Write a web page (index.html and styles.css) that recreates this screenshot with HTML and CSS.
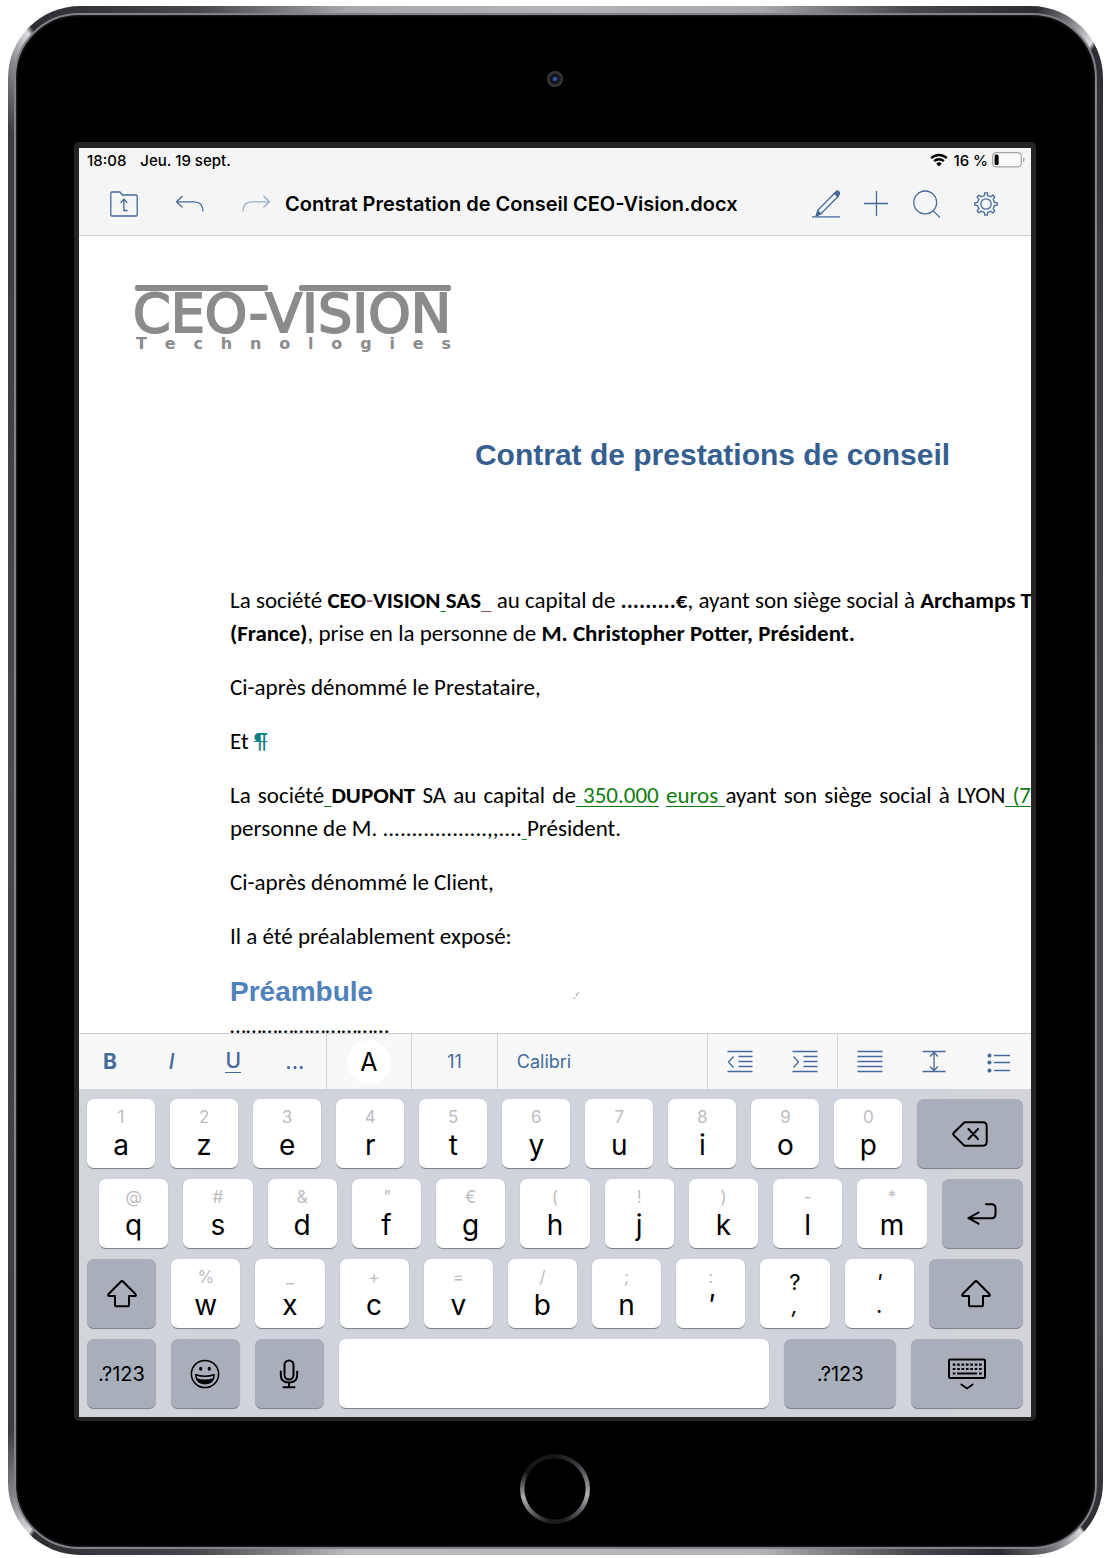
FILE: index.html
```html
<!DOCTYPE html>
<html lang="fr">
<head>
<meta charset="utf-8">
<title>Contrat Prestation de Conseil CEO-Vision.docx</title>
<link rel="stylesheet" href="styles.css">
</head>
<body>
<div class="device">
<div class="glass">
  <div class="top-bezel"><span class="camera"></span></div>
  <div class="screen">
    <header class="app-header">
      <div class="status">
        <span>18:08</span><span class="date">Jeu. 19 sept.</span>
        <svg class="wifi" width="18" height="14" viewBox="0 0 18 14"><path fill="none" stroke="#000" stroke-width="2.4" d="M1.2 5.2a11 11 0 0 1 15.6 0M4.2 8.2a6.8 6.8 0 0 1 9.6 0"/><path d="M9 13.4 6.3 10.6a3.8 3.8 0 0 1 5.4 0Z"/></svg>
        <span>16 %</span>
        <svg class="battery" width="33" height="16" viewBox="0 0 33 16"><rect x=".7" y=".7" width="28.6" height="14.2" rx="3.6" fill="#fafafa" stroke="#a3a3a5" stroke-width="1.2"/><rect x="2.6" y="2.5" width="4" height="10.6" rx="1.6"/><path d="M31 5.4a2.6 2.6 0 0 1 0 4.8Z" fill="#a3a3a5"/></svg>
      </div>
      <div class="titlebar">
        <button class="tool folder" aria-label="Dossier"><svg width="28" height="26" viewBox="0 0 28 26"><path d="M.8 24V2.4q0-1.4 1.3-1.4h7.7l2.7 3h13.2q1.5 0 1.5 1.4V24q0 1-1.2 1H2q-1.2 0-1.2-1Z"/><path d="M17.5 19.5h-3.600V8.500M10.600 11.700l3.300-3.500 3.300 3.500"/></svg></button>
        <button class="tool undo" aria-label="Annuler"><svg width="30" height="18" viewBox="0 0 30 18"><path d="M7.500 1 1.500 6.800l6 5.700M1.500 6.800h17.500q9 0 9 9.700"/></svg></button>
        <button class="tool redo" aria-label="Rétablir"><svg width="30" height="18" viewBox="0 0 30 18"><path d="m22.500 1 6 5.800-6 5.700M28.500 6.800H11q-9 0-9 9.700"/></svg></button>
        <h1 class="filename">Contrat Prestation de Conseil CEO-Vision.docx</h1>
        <button class="tool pencil" aria-label="Modifier"><svg width="28" height="28" viewBox="0 0 28 28"><path d="M0 26.800h28M4.500 25.500l1.300-5.200L22.800 3l3.400 3.300L9 23.600Z"/><path class="solid" d="m22.500 3.400 1.600-1.800q1.200-1.200 2.700.2t.3 2.800L25.600 6.600ZM4.300 25.800l1.600-4.600 2.900 2.700Z"/></svg></button>
        <button class="tool plus" aria-label="Insérer"><svg width="24" height="26" viewBox="0 0 24 26"><path d="M0 12.500h24M12.500 0v25"/></svg></button>
        <button class="tool search" aria-label="Rechercher"><svg width="28" height="28" viewBox="0 0 28 28"><circle cx="12.200" cy="12.400" r="11.400"/><path d="m20 20.600 7 7"/></svg></button>
        <button class="tool gear" aria-label="Réglages"><svg width="24" height="24" viewBox="0 0 24 24"><path d="M10.300 3.600 10.800.8h2.400l.5 2.800 3 1.200L19 3.200 20.800 5l-1.600 2.300 1.200 3 2.800.5v2.400l-2.800.5-1.200 3 1.600 2.300-1.800 1.800-2.300-1.600-3 1.200-.5 2.800h-2.400l-.5-2.800-3-1.200L5 20.800 3.200 19l1.600-2.300-1.200-3-2.800-.5v-2.400l2.800-.5 1.200-3L3.200 5 5 3.200l2.300 1.600Z"/><circle cx="12" cy="12" r="5.200"/></svg></button>
      </div>
    </header>

    <main class="document">
      <div class="logo">
        <div class="logo-bars"><i></i><i></i></div>
        <div class="logo-name">CEO-VISION</div>
        <div class="logo-sub">T e c h n o l o g i e s</div>
      </div>
      <article class="text">
        <h2 class="title">Contrat de prestations de conseil</h2>
        <p><span class="fill">La société <b>CEO<span class="minus">-</span>VISION<u> </u>SAS<u class="plum">&nbsp;&nbsp;</u></b> au capital de <b>.........€</b>, ayant son siège social à <b>Archamps T</b></span>
        <b>(France)</b>, prise en la personne de <b>M. Christopher Potter, Président.</b></p>
        <p>Ci-après dénommé le Prestataire,</p>
        <p>Et <s>¶</s></p>
        <p><span class="fill">La société<u> </u><b>DUPONT</b> SA au capital de<u> 350.000</u> <u>euros </u>ayant son siège social à LYON<u> (7</u></span>
        personne de M. ..................,,....<u> </u>Président.</p>
        <p>Ci-après dénommé le Client,</p>
        <p>Il a été préalablement exposé:</p>
        <h3 class="section">Préambule</h3>
        <svg class="stray" width="6" height="8" viewBox="0 0 6 8"><path d="M.500 7 2 5.500M3 4l2.500-3.500" fill="none" stroke="#888"/></svg>
        <p class="cut">…………………………</p>
      </article>
    </main>

    <div class="format">
      <div class="group styles">
        <button><b>B</b></button><button><i>I</i></button><button><span class="under">U</span></button><button>...</button>
      </div>
      <div class="group color"><button class="letter">A</button></div>
      <div class="group size"><button>11</button></div>
      <div class="group font"><button>Calibri</button></div>
      <div class="group indent">
        <button aria-label="Diminuer le retrait"><svg width="26" height="24" viewBox="0 0 26 24"><path d="M.500 1.500h25M11.500 6.500h14M11.500 11.500h14M11.500 16.500h14M.500 21.500h25M6.500 6.500l-5 5.500 5 5.500"/></svg></button>
        <button aria-label="Augmenter le retrait"><svg width="26" height="24" viewBox="0 0 26 24"><path d="M.500 1.500h25M11.500 6.500h14M11.500 11.500h14M11.500 16.500h14M.500 21.500h25M1.500 6.500l5 5.500-5 5.500"/></svg></button>
      </div>
      <div class="group para">
        <button aria-label="Justifier"><svg width="26" height="24" viewBox="0 0 26 24"><path d="M.500 1.500h25M.500 6.500h25M.500 11.500h25M.500 16.500h25M.500 21.500h25"/></svg></button>
        <button aria-label="Interligne"><svg width="26" height="24" viewBox="0 0 26 24"><path d="M1.500 1.500h23M1.500 21.500h23M13 2.500v18M9 6.500l4-4 4 4M9 16.500l4 4 4-4"/></svg></button>
        <button aria-label="Liste"><svg width="26" height="24" viewBox="0 0 26 24"><path d="M8 5.500h16M8 12.500h16M8 20.500h16"/><circle class="solid" cx="3.500" cy="5.500" r="1.400"/><circle class="solid" cx="3.500" cy="12.500" r="1.400"/><circle class="solid" cx="3.500" cy="20.500" r="1.400"/></svg></button>
      </div>
    </div>

    <div class="keyboard">
      <div class="row r1">
        <button><small>1</small>a</button><button><small>2</small>z</button><button><small>3</small>e</button><button><small>4</small>r</button><button><small>5</small>t</button><button><small>6</small>y</button><button><small>7</small>u</button><button><small>8</small>i</button><button><small>9</small>o</button><button><small>0</small>p</button>
        <button class="dark del" aria-label="Effacer"><svg width="36" height="26" viewBox="0 0 36 26"><path d="M12.500 1.200h18.200q4 0 4 4v15.500q0 4-4 4H12.500L2 14.500q-1.400-1.500 0-3ZM16.500 8l9.500 10M26 8l-9.500 10"/></svg></button>
      </div>
      <div class="row r2">
        <button><small>@</small>q</button><button><small>#</small>s</button><button><small>&amp;</small>d</button><button><small><i>"</i></small>f</button><button><small>€</small>g</button><button><small>(</small>h</button><button><small>!</small>j</button><button><small>)</small>k</button><button><small>-</small>l</button><button><small>*</small>m</button>
        <button class="dark enter" aria-label="Retour"><svg width="30" height="22" viewBox="0 0 30 22"><path d="M19 1.200h5.500q4 0 4 4v6q0 4-4 4H1.500M11.500 9.500l-10 5.600 10 5.600"/></svg></button>
      </div>
      <div class="row r3">
        <button class="dark" aria-label="Majuscule"><svg width="30" height="28" viewBox="0 0 30 28"><path d="M13.800 1.700q1.200-1.200 2.400 0L28.400 14q1.200 2-.6 2H22v8.700q0 1.600-1.600 1.600H9.600Q8 26.300 8 24.700V16H2.200q-1.800 0-.6-2Z"/></svg></button>
        <button><small>%</small>w</button><button><small>_</small>x</button><button><small>+</small>c</button><button><small>=</small>v</button><button><small>/</small>b</button><button><small>;</small>n</button><button><small>:</small><i>'</i></button><button class="twin"><small>?</small><i>,</i></button><button class="twin"><small><i>'</i></small>.</button>
        <button class="dark shift" aria-label="Majuscule"><svg width="30" height="28" viewBox="0 0 30 28"><path d="M13.800 1.700q1.200-1.200 2.400 0L28.400 14q1.200 2-.6 2H22v8.700q0 1.600-1.600 1.600H9.600Q8 26.300 8 24.700V16H2.200q-1.800 0-.6-2Z"/></svg></button>
      </div>
      <div class="row r4">
        <button class="dark">.?123</button>
        <button class="dark" aria-label="Emoji"><svg width="30" height="30" viewBox="0 0 30 30"><g stroke-width="1.500"><circle cx="15" cy="15" r="13.600"/><path d="M5.700 15.800q9.300 3 18.600 0-.6 9-9.300 9t-9.300-9Z"/></g><g class="ink"><ellipse cx="10.700" cy="9.800" rx="1.600" ry="2"/><ellipse cx="19.300" cy="9.800" rx="1.600" ry="2"/><path d="M6.500 19.200q8.500 2.600 17 0-2 5.500-8.500 5.500t-8.500-5.500Z"/></g></svg></button>
        <button class="dark" aria-label="Dictée"><svg width="20" height="30" viewBox="0 0 20 30"><rect x="5.500" y="1.500" width="9" height="19" rx="4.500"/><path d="M1.800 12.500V16q0 7.500 8.200 7.500t8.200-7.500v-3.500M10 23.500V28M4.500 28.300h11"/></svg></button>
        <button class="space" aria-label="Espace"></button>
        <button class="dark num">.?123</button>
        <button class="dark hide" aria-label="Masquer le clavier"><svg width="38" height="32" viewBox="0 0 38 32"><rect x="1" y="1.500" width="36" height="18.500" rx="1"/><path stroke-width="2.200" stroke-dasharray="2.700 1.700" d="M4.700 6.700h29M4.700 11h29"/><path stroke-width="2.200" d="M4.700 15.500h2.700M9.200 15.500h19.800M31 15.500h2.700"/><path stroke-width="1.600" d="m12.700 26 6.300 4.500 6.300-4.500"/></svg></button>
      </div>
    </div>
  </div>
  <div class="bottom-bezel"><button class="home" aria-label="Accueil"></button></div>
</div>
</div>
</body>
</html>
```
FILE: styles.css
```css
* { box-sizing: border-box; }
body { margin: 0; padding: 6px 5px 4px 8px; background: #fff; font-family: Inter, "Liberation Sans", sans-serif; color: #000; }
button { margin: 0; padding: 0; border: 0; background: none; font: inherit; color: inherit; display: flex; align-items: center; justify-content: center; }
svg { display: block; flex: none; }

/* Device */
.device {
  padding: 7px 6px 6px;
  border-radius: 72px;
  background: conic-gradient(#b4b4b6 0deg, #a8a8aa 15deg, #45454b 25deg, #2c2c32 32deg, #77777c 34deg, #dedee0 36deg, #2c2c32 36.3deg, #3c3c42 45deg, #4a4a50 90deg, #4a4a50 135deg, #2c2c32 144.800deg, #dedee0 145deg, #77777c 147deg, #2c2c32 150deg, #45454b 155deg, #b4b4b6 165deg, #bcbcbe 195deg, #45454b 205deg, #2c2c32 214.700deg, #dedee0 215deg, #8a8a90 217deg, #3c3c42 220deg, #4a4a50 270deg, #3c3c42 320deg, #8a8a90 323deg, #dedee0 324.800deg, #2c2c32 325.200deg, #45454b 335deg, #a8a8aa 345deg, #b4b4b6 360deg);
}
.glass { padding: 0 59px 0 58px; border: 2px solid #828288; border-radius: 65px; background: #000; box-shadow: inset 0 0 2px 1px #222226; }
.top-bezel { height: 127px; display: flex; justify-content: center; align-items: center; }
.camera { width: 16px; height: 16px; border-radius: 50%; background: radial-gradient(circle, #3558a8 0 1px, #10182e 3px, #0c0c14 4px, #303034 6px, #3e3e44 8px); }
.bottom-bezel { height: 126px; display: flex; justify-content: center; align-items: center; padding-top: 10px; }
.home { width: 70px; height: 70px; border-radius: 50%; background: radial-gradient(circle, #000 0 30px, transparent 31px), conic-gradient(#161618, #35353a 40deg, #77777c 75deg, #b0b0b4 100deg, #55555a 135deg, #1c1c1e 165deg, #1c1c1e 190deg, #55555a 220deg, #b0b0b4 255deg, #66666a 275deg, #161618 300deg, #161618); }
.screen { border: 5px solid #242424; border-bottom-width: 4px; border-top-width: 6px; border-radius: 5px; background: #fff; }

/* Header */
.app-header { background: #f5f5f5; border-bottom: 1px solid #cfcfcf; }
.status { display: flex; align-items: center; height: 24px; padding: 0 6px 0 8px; font-size: 15px; font-weight: 500; }
.date { margin-left: 14px; }
.wifi { margin: 0 5px 0 auto; }
.battery { margin-left: 4px; }
.titlebar { display: flex; align-items: center; height: 63px; padding: 0 33px 0 31px; }
.tool svg, .format svg { fill: none; stroke: #456a9b; stroke-width: 1.300; }
.tool .solid, .format .solid { fill: #456a9b; }
.undo { margin-left: 37px; }
.redo { margin-left: 36px; opacity: .5; }
.filename { flex: 1; margin: 0 0 0 14px; font-size: 20px; line-height: 24px; font-weight: 600; white-space: nowrap; }
.plus { margin-left: 24px; }
.search { margin-left: 25px; }
.gear { margin-left: 33px; }

/* Document */
.document { height: 797px; overflow: hidden; }
.logo { width: 320px; margin: 49px 0 0 54px; color: #8b8b8b; font-family: "DejaVu Sans", sans-serif; }
.logo-bars { display: flex; justify-content: space-between; padding: 0 2px; }
.logo-bars i { width: 133px; height: 6px; border-radius: 2px; background: #8b8b8b; }
.logo-bars i + i { width: 152px; }
.logo-name { font-size: 54px; line-height: 46px; white-space: nowrap; -webkit-text-stroke: 2px #8b8b8b; }
.logo-sub { padding: 0 2px 0 3px; font-size: 16px; line-height: 13px; font-weight: 700; text-align-last: justify; }
.text { padding-left: 151px; font-family: Carlito, Lato, sans-serif; font-size: 23px; line-height: 33px; }
.text p { margin: 0 0 21px; white-space: nowrap; }
.fill { display: block; text-align-last: justify; }
.title { margin: 87px 0 111px; padding-left: 164px; text-align: center; font: 700 30px/36px "Liberation Sans", sans-serif; color: #365f91; white-space: nowrap; }
.text u { color: #0f7d0f; text-decoration-thickness: 1px; text-underline-offset: 3px; }
.text .plum { color: #8a4a6b; }
.minus { color: #8a4a6b; font-weight: 400; }
.text s { color: #0b8080; text-decoration-thickness: 1px; }
.text .section { margin: 21px 0 0; font: 700 28px/36px "Liberation Sans", sans-serif; color: #4f81bd; }
.stray { margin: -18px 0 0 343px; }
.text .cut { margin-top: 9px; }

/* Formatting bar */
.format { display: flex; height: 56px; border-top: 1px solid #cdcdcf; background: #f8f8f9; color: #456a9b; font-size: 18px; }
.group { display: flex; justify-content: space-around; align-items: center; border-left: 1px solid #d4d4d6; }
.group:first-child { border-left: 0; }
.styles { flex: 248; font-size: 21px; font-weight: 500; }
.styles button { flex: 1; }
.under { line-height: 22px; border-bottom: 1px solid #456a9b; }
.color, .size { flex: 85; }
.letter { width: 44px; height: 44px; border-radius: 50%; background: #fff; color: #000; font-size: 25px; }
.font { flex: 210; justify-content: flex-start; }
.font button { margin-left: 19px; }
.indent { flex: 130; }
.para { flex: 194; }

/* Keyboard */
.keyboard { display: flex; flex-direction: column; gap: 11px; padding: 10px 8px 9px; background: linear-gradient(90deg, #d1d4d9, #d0d3dc 30%, #d0d3dc 80%, #d2d4d8); }
.row { display: flex; gap: 15px; height: 69px; }
.row button { flex: 69 1 0; min-width: 0; flex-direction: column; justify-content: flex-start; padding-top: 9px; border-radius: 7px; background: #fff; box-shadow: 0 2px 0 -1px #85878c, 0 1px 1px #94969b; font-size: 28px; line-height: 34px; }
.row small { margin-bottom: 2px; font-size: 17px; line-height: 18px; color: #bdbdbf; }
.row .twin { font-size: 22px; line-height: 18px; }
.row .twin small { margin: 0; font-size: 22px; line-height: 28px; color: #000; }
.row .dark { justify-content: center; padding: 0; background: #a9afba; font-size: 20px; }
.row svg { fill: none; stroke: #000; stroke-width: 2; stroke-linecap: round; stroke-linejoin: round; }
.row .hide svg { stroke-linecap: butt; }
.row .ink { fill: #000; stroke: none; }
.row .del { flex-grow: 107; }
.r2 { padding-left: 12px; }
.row .enter { flex-grow: 81; }
.row .shift { flex-grow: 94; }
.row .space { flex-grow: 431; }
.row .num, .row .hide { flex-grow: 112; }
```
